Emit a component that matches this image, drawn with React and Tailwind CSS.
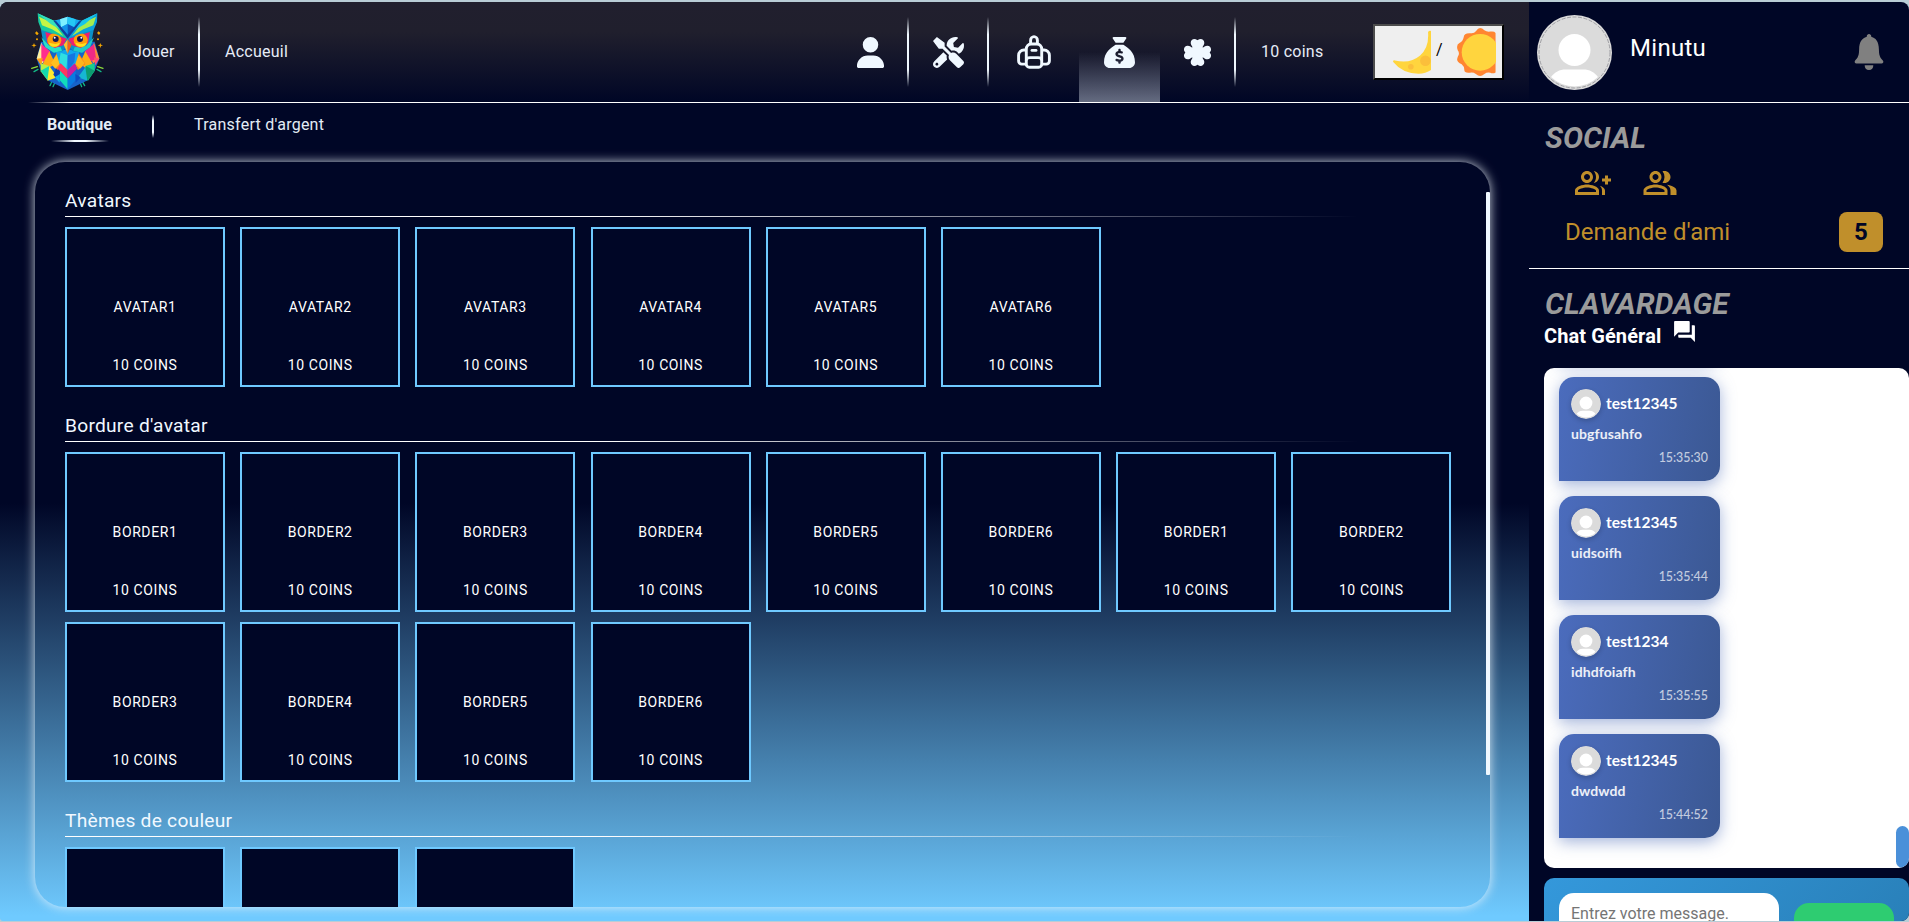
import { FaTools } from "react-icons/fa";
import { FaUser, FaSackDollar, FaClover } from "react-icons/fa6";
import { MdOutlineGroupAdd, MdOutlinePeopleAlt, MdForum } from "react-icons/md";
import { IoIosNotifications } from "react-icons/io";

const sections = [
  {
    title: "Avatars",
    items: ["AVATAR1", "AVATAR2", "AVATAR3", "AVATAR4", "AVATAR5", "AVATAR6"],
  },
  {
    title: "Bordure d'avatar",
    items: [
      "BORDER1", "BORDER2", "BORDER3", "BORDER4", "BORDER5", "BORDER6",
      "BORDER1", "BORDER2", "BORDER3", "BORDER4", "BORDER5", "BORDER6",
    ],
  },
  { title: "Thèmes de couleur", items: ["", "", ""] },
];

const messages = [
  { user: "test12345", text: "ubgfusahfo", time: "15:35:30" },
  { user: "test12345", text: "uidsoifh", time: "15:35:44" },
  { user: "test1234", text: "idhdfoiafh", time: "15:35:55" },
  { user: "test12345", text: "dwdwdd", time: "15:44:52" },
];

function Owl() {
  return (
    <svg viewBox="0 0 300 300" className="block size-[100px]">
      {/* sparkles */}
      <g fill="#f5a800">
        <path d="M45 99l5-5 6 7-5 5zM42 129l2 5 6 2-6 2-2 6-2-6-6-2 6-2zM231 99l5-5 5 5-4 6zM241 129l2 5 6 2-6 2-2 6-2-6-6-2 6-2z" />
        <circle cx="51" cy="118" r="3" />
        <circle cx="234" cy="118" r="3" />
      </g>
      <g strokeWidth="4" strokeLinecap="round" fill="none">
        <path d="M35 205l17-5M233 200l16 5" stroke="#8bdc3c" />
        <path d="M42 215l12-7M231 208l12 7M90 257l6-13M99 260l5-11M187 244l7 13M181 250l4 10" stroke="#12b886" />
      </g>
      {/* body */}
      <path d="M63 125L50 176l12 36 24 30 57 28 57-28 24-30 14-36-14-51z" fill="#1763c9" />
      <path d="M64 128L50 176l18 14 14-24z" fill="#fff0a0" />
      <path d="M64 132l26 22-2 38-24-10z" fill="#ff2d8d" />
      <path d="M50 176l18-2-4 24z" fill="#ff9d1a" />
      <path d="M88 154l-20 38 18 12 20-12z" fill="#ffad14" />
      <path d="M62 190l26 8-6 42-20-26z" fill="#b7ef45" />
      <path d="M62 212l26-14 12 30-16 14z" fill="#14d8b0" />
      <path d="M82 242l6-44 24 34z" fill="#ffe930" />
      <path d="M100 224l12-30 20 44-26-6z" fill="#0d3fae" />
      <path d="M112 156l-20 36 22 18 12-26z" fill="#fb7a1f" />
      <path d="M110 164l16 20-20 22-14-16z" fill="#ffc01f" />
      <path d="M222 128l16 48-18 14-14-24z" fill="#ff8a3a" />
      <path d="M222 132l-28 22 4 38 30-16z" fill="#ef2a86" />
      <path d="M238 176l-16-4 4 24z" fill="#ff4f73" />
      <path d="M196 154l22 38-18 16-20-18z" fill="#ffad14" />
      <path d="M224 190l-28 8 8 44 20-30z" fill="#15cf8c" />
      <path d="M224 212l-26-14-12 30 16 14z" fill="#0c9c70" />
      <path d="M202 242l-6-40-22 30z" fill="#16b7d2" />
      <path d="M174 156l22 36-22 18-14-26z" fill="#ff7a1c" />
      <path d="M176 166l-16 20 20 20 14-16z" fill="#ffb51e" />
      <path d="M108 156l35-8 35 8-12 36-23 22-24-22z" fill="#12a7ee" />
      <path d="M122 158l21 8-4 42-22-22z" fill="#30dfe0" />
      <path d="M166 158l-23 8v46l20-26z" fill="#1775e0" />
      <path d="M122 190l21 20v26l-30-30z" fill="#ff365f" />
      <path d="M164 190l-21 20v26l28-30z" fill="#c91fa0" />
      <path d="M120 212l23 24v32l-24-28z" fill="#12dcbb" />
      <path d="M167 212l-24 24v32l24-28z" fill="#087be0" />
      <path d="M104 232l16-10-1 26z" fill="#0cb0e8" />
      <path d="M182 232l-16-10 1 26z" fill="#0d4cc4" />
      {/* face */}
      <path d="M63 90l8 44 28 24 28-4 16-20 16 20 30 4 24-24 8-44-78-30z" fill="#0c8fc6" />
      <path d="M64 112l12 30 26 16 24-6-4-10-34-4z" fill="#2be0c4" />
      <path d="M222 112l-12 30-24 16-26-6 4-10 34-4z" fill="#23c9c4" />
      <path d="M76 96l6 34 22 14 26-8 10-20z" fill="#ed1f6f" />
      <path d="M210 96l-6 34-22 14-26-8-10-20z" fill="#ed1f6f" />
      <circle cx="103" cy="121" r="21" fill="#ff9d0a" />
      <circle cx="182" cy="121" r="21" fill="#ff9d0a" />
      <path d="M86 128a18 18 0 0 0 34 0l-14 4z" fill="#ffe01f" />
      <path d="M166 128a18 18 0 0 0 34 0l-14 4z" fill="#ffe01f" />
      <circle cx="107" cy="117" r="9" fill="#1a1850" />
      <circle cx="180" cy="117" r="9" fill="#1a1850" />
      <circle cx="104" cy="113" r="3" fill="#fff" />
      <circle cx="184" cy="113" r="3" fill="#fff" />
      <path d="M100 62l20-4 23-8 24 8 18 4-42 54z" fill="#16a9ef" />
      <path d="M120 58l23-8-2 22-18 10z" fill="#7defff" />
      <path d="M167 58l-24-8v22l20 12z" fill="#25c8f5" />
      <path d="M123 82l20-10v40z" fill="#1190e8" />
      <path d="M163 82l-20-10v40z" fill="#0a55bd" />
      {/* brows */}
      <path d="M53 40l49 22 40 54-36-14-42-12-9-24z" fill="#16c9a0" />
      <path d="M57 50l43 20 30 38-34-20-30-12z" fill="#c5f545" />
      <path d="M53 40l49 22 20 27-30-17z" fill="#35dfbd" />
      <path d="M232 40l-47 22-42 54 36-14 42-12 10-24z" fill="#0aa0dc" />
      <path d="M228 50l-42 20-30 38 34-20 30-12z" fill="#a6ec4e" />
      <path d="M232 40l-47 22-20 27 30-17z" fill="#18c7e8" />
      <path d="M100 62l43 54 42-54-8 2-34 40-34-40z" fill="#10409c" />
      {/* beak */}
      <path d="M143 118l-12 16 12 27z" fill="#ffbd2e" />
      <path d="M143 118l12 16-12 27z" fill="#f4601c" />
    </svg>
  );
}

function Backpack() {
  return (
    <svg viewBox="0 0 34 34" className="block size-[34px]" fill="none" stroke="#f0f8ff" strokeWidth="2.9" strokeLinejoin="round">
      <path d="M13.6 8.5V5.2a3.4 3.6 0 0 1 6.8 0V8.5" />
      <path d="M9.3 14a5 5.200 0 0 1 4.700-5h6a5 5.200 0 0 1 4.700 5v15.200a3 3 0 0 1-3 3H12.300a3 3 0 0 1-3-3z" />
      <path d="M9.300 15H7a5.300 5.300 0 0 0-5.400 5.300v5.600a3.200 3.200 0 0 0 3.200 3.200h4.500M24.700 15H27a5.300 5.300 0 0 1 5.400 5.300v5.600a3.200 3.200 0 0 1-3.200 3.200h-4.500" />
      <path d="M15 15.400h4" strokeLinecap="round" />
      <path d="M9.300 25.500c0-2 1.700-2.900 3.700-2.900h8c2 0 3.700.9 3.700 2.900" />
    </svg>
  );
}

function Person({ className }) {
  return (
    <svg viewBox="0 0 75 75" className={className}>
      <circle cx="37.500" cy="37.500" r="37.500" fill="#dbdbdb" />
      <circle cx="37.500" cy="35" r="16" fill="#fff" />
      <path d="M14 62c4-5 8-7.500 15-7.500h17c7 0 11 2.500 15 7.500a34 34 0 0 1-47 0z" fill="#fff" />
    </svg>
  );
}

function UserPicture() {
  return (
    <svg viewBox="0 0 75 75" className="mt-[15px] size-[75px]">
      <circle cx="37.500" cy="37.500" r="37.500" fill="#dbdbdb" />
      <circle cx="37.500" cy="37.500" r="35.500" fill="none" stroke="#8f8f96" strokeWidth="0.8" strokeDasharray="4 1.500" />
      <circle cx="37.500" cy="35" r="16" fill="#fff" />
      <path d="M14 62c4-5 8-7.500 15-7.500h17c7 0 11 2.500 15 7.500a34 34 0 0 1-47 0z" fill="#fff" />
    </svg>
  );
}

function Divider({ className }) {
  return (
    <div className={`w-0.5 shrink-0 bg-[linear-gradient(to_bottom,transparent,#f0f8ff_25%,#f0f8ff_75%,transparent)] ${className}`} />
  );
}

function Header() {
  return (
    <header className="flex h-[100px] shrink-0 items-center bg-[linear-gradient(to_bottom,#211f2e_0%,#201f2d_30%,#000626_100%)] text-base text-[#e6ecf7]">
      <div className="-mt-1 ml-5">
        <Owl />
      </div>
      <span className="ml-[13px] w-[65px] tracking-[0.2px]">Jouer</span>
      <Divider className="h-[70px]" />
      <span className="ml-[25px] tracking-[0.25px]">Accueuil</span>
      <div className="ml-auto flex h-full items-center text-[#f0f8ff]">
        <div className="flex w-[73px] justify-center">
          <FaUser size={31} />
        </div>
        <Divider className="h-[70px]" />
        <div className="flex w-[78px] justify-center">
          <FaTools size={31} />
        </div>
        <Divider className="h-[70px]" />
        <div className="flex w-[90px] justify-center">
          <Backpack />
        </div>
        <div className="flex h-full w-[81px] items-center justify-center bg-[linear-gradient(to_bottom,transparent_50%,rgba(240,248,255,0.42)_100%)]">
          <FaSackDollar size={31} />
        </div>
        <div className="flex w-[74px] justify-center">
          <FaClover size={31} />
        </div>
        <Divider className="h-[70px]" />
      </div>
      <span className="ml-[25px] w-[112px] tracking-[0.25px] text-[#e6ecf7]">10 coins</span>
      <button className="mr-[25px] flex h-14 w-[131px] items-center border-2 border-t-[#4c4c4c] border-r-black border-b-black border-l-[#4c4c4c] bg-[#efefef] text-black">
        <svg viewBox="98 55 115 131" className="ml-[18px] h-[44px] w-[38px] shrink-0">
          <path d="M204 60q4-5 9-3v118q-16 11-38 11-48 0-77-36 0-5 6-4 46 11 76-15 28-25 24-71z" fill="#ffd53e" />
          <circle cx="196" cy="147" r="16" fill="#fbbf3b" />
          <circle cx="152" cy="165" r="8.500" fill="#fbbf3b" />
        </svg>
        <span className="-mt-1 ml-[5px] w-4 text-left text-base">/</span>
        <svg viewBox="289 41 119 146" className="ml-[4px] h-[48px] w-[40px] shrink-0">
          <path d="M361 41q6 0 13 7 8 6 18 4 12-2 16 4v120q-8 5-16 1-10-2-18 4-7 6-13 6t-13-6q-8-6-18-4-17 2-17-8 0-12-8-18-14-6-14-15 0-5 5-14 2-6-3-13-6-16 5-22 11-6 13-18 1-14 22-12 10 1 15-6 7-10 13-10z" fill="#ff8631" />
          <circle cx="361" cy="115" r="56" fill="#ffd53e" />
        </svg>
      </button>
    </header>
  );
}

function Shop() {
  return (
    <div className="ml-[35px] flex h-[745px] w-[1455px] overflow-hidden rounded-[30px] shadow-[0_0_11px_rgba(240,248,255,0.85)]">
      <div className="flex w-[1451px] shrink-0 flex-col gap-[25px] pt-[25px] pl-[30px]">
        {sections.map((s) => (
          <section key={s.title} className="shrink-0">
            <h2 className="h-[29px] text-[19.2px] leading-[28px] tracking-[0.25px] text-[#f0f8ff]">{s.title}</h2>
            <div className="h-px w-[1320px] bg-[linear-gradient(to_right,#fff_0%,#fff_40%,transparent_98%)]" />
            <div className="mt-[10px] flex flex-wrap gap-x-[15.2px] gap-y-[10px]">
              {s.items.map((it, i) => (
                <div key={i} className="flex size-40 flex-col items-center border-2 border-[#6fc9ff] bg-[#000626] pt-[68px] text-sm tracking-[0.6px] text-white">
                  {it && <span>{it}</span>}
                  {it && <span className="mt-[38px]">10 COINS</span>}
                </div>
              ))}
            </div>
          </section>
        ))}
      </div>
      <div className="mt-[30px] h-[583px] w-1 shrink-0 rounded-[1px] bg-[#f0f8ff]" />
    </div>
  );
}

function Sidebar() {
  return (
    <aside className="flex h-full w-[380px] shrink-0 flex-col bg-[#000626] text-white">
      <div className="flex h-[101px] shrink-0 items-start border-b border-white pl-2">
        <div className="-mt-[2px]">
          <UserPicture />
        </div>
        <span className="mt-[28px] ml-[18px] text-2xl leading-[36px] tracking-[0.3px]">Minutu</span>
        <IoIosNotifications className="mt-[27px] mr-[17px] ml-auto text-[#808080]" size={46} />
      </div>
      <div className="h-[166px] shrink-0 border-b border-white pl-[15px]">
        <h2 className="mt-[14px] ml-px text-[30px] leading-[42px] font-bold text-[#9b9b9b] italic">SOCIAL</h2>
        <div className="mt-[6px] flex gap-[31px] pl-[31px] text-[#c08f2b]">
          <MdOutlineGroupAdd size={36} />
          <MdOutlinePeopleAlt size={36} />
        </div>
        <div className="mt-[11px] flex items-center justify-between pr-[26px] pl-[21px]">
          <span className="text-2xl text-[#c08f2b]">Demande d'ami</span>
          <span className="flex h-10 w-11 items-center justify-center rounded-lg bg-[#c08f2b] text-2xl font-bold text-[#000626]">5</span>
        </div>
      </div>
      <div className="flex h-[99px] shrink-0 flex-col pl-[15px]">
        <h2 className="mt-[14px] ml-px text-[30px] leading-[42px] font-bold text-[#9b9b9b] italic">CLAVARDAGE</h2>
        <div className="-mt-[6px] flex items-start">
          <span className="mt-[2px] text-xl leading-[30px] font-bold tracking-[0.1px]">Chat Général</span>
          <MdForum className="ml-[11px]" size={25} />
        </div>
      </div>
      <div className="ml-[15px] flex h-[500px] shrink-0 overflow-hidden rounded-[10px] bg-white font-['Lato',sans-serif]">
        <div className="-mt-[110px] flex flex-1 flex-col gap-[15px] pl-[15px]">
          <div className="h-[104px] w-[161px] shrink-0 rounded-[15px] rounded-bl-none bg-[#4b6cb7] shadow-[0_4px_15px_rgba(75,108,183,0.4)]" />
          {messages.map((m) => (
            <div key={m.time} className="h-[104px] w-[161px] shrink-0 rounded-[15px] rounded-bl-none bg-[linear-gradient(100deg,#4b6cbd,#3b5893)] p-3 shadow-[0_4px_15px_rgba(75,108,183,0.5)]">
              <div className="flex h-[30px] items-center">
                <Person className="size-[30px] rounded-full shadow-[0_2px_5px_rgba(0,0,0,0.2)]" />
                <span className="ml-[5px] text-[15.500px] font-bold">{m.user}</span>
              </div>
              <div className="mt-1 text-[14px] leading-[21px] font-bold tracking-[0.1px] text-white/90">{m.text}</div>
              <div className="mt-[5px] text-right text-[12.400px] leading-[18px] font-medium text-white/70">{m.time}</div>
            </div>
          ))}
        </div>
        <div className="mt-auto h-[42px] w-[13px] rounded-[7px] bg-[#4a90d9]" />
      </div>
      <div className="mt-[10px] ml-[15px] flex h-[43px] shrink-0 items-start overflow-hidden rounded-t-[10px] bg-[linear-gradient(135deg,#3498db,#2980b9)] pt-[15px] pl-[15px]">
        <div className="h-[60px] w-[220px] rounded-[15px] bg-white px-3 pt-[9px] text-base text-[#757575]">Entrez votre message.</div>
        <div className="mt-[10px] ml-[15px] h-[50px] w-[100px] rounded-[15px] bg-[#2ecc71] pt-[13px] text-center font-['Liberation_Sans',sans-serif] text-base">Envoyer</div>
      </div>
    </aside>
  );
}

export default function App() {
  return (
    <div className="h-[922px] w-[1909px] overflow-hidden bg-[#b9cdd6] pt-0.5 pb-px font-['Roboto',sans-serif]">
      <div className="flex h-[919px] overflow-hidden rounded-lg rounded-bl-[3px]">
        <div className="flex w-[1529px] shrink-0 flex-col bg-[linear-gradient(to_bottom,#000626_54.500%,#6fcaff_99.500%)]">
          <Header />
          <div className="h-px shrink-0 bg-[linear-gradient(to_right,transparent_28px,#fff_70px)]" />
          <nav className="flex h-[59px] shrink-0 text-base text-[#e3ecf5]">
            <div className="ml-[47px] flex w-[65px] flex-col items-center">
              <span className="mt-[10px] font-bold tracking-[0.05px]">Boutique</span>
              <div className="mt-[3px] h-0.5 w-[58px] bg-[linear-gradient(to_right,transparent,#f0f8ff_40%,#f0f8ff_60%,transparent)]" />
            </div>
            <Divider className="mt-[12px] ml-10 h-[23px]" />
            <span className="mt-[10px] ml-[40px] tracking-[0.25px]">Transfert d'argent</span>
          </nav>
          <Shop />
        </div>
        <Sidebar />
      </div>
    </div>
  );
}
